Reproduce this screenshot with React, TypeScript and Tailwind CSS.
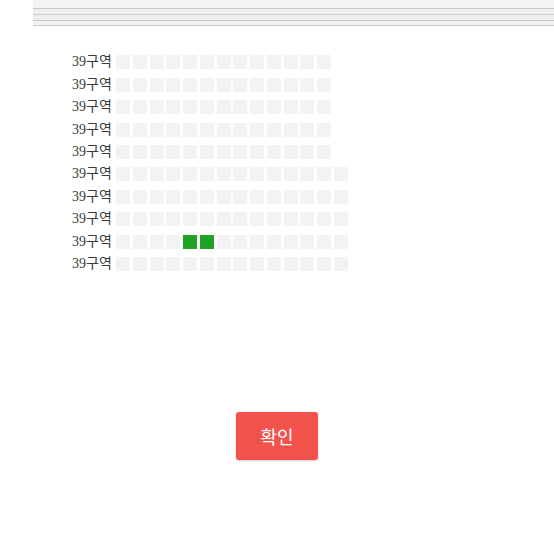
import React from "react";

const rows = Array.from({ length: 10 }, (_, i) => ({
  count: i < 5 ? 13 : 14,
  selected: i === 8 ? [4, 5] : [],
}));

export default function App() {
  return (
    <div className="w-[554px] h-[554px] bg-white overflow-hidden relative">
      <div className="ml-[33px] h-[26px] bg-[#f0f0f0] flex flex-col">
        <div className="h-[8px] bg-[#f3f3f3]" />
        <div className="h-px bg-[#c8c8c8]" />
        <div className="h-[5px] bg-[#eeeeee]" />
        <div className="h-px bg-[#cccccc]" />
        <div className="h-[5px] bg-[#eeeeee]" />
        <div className="h-px bg-[#c8c8c8]" />
        <div className="h-[4px] bg-[#f0f0f0]" />
        <div className="h-px bg-[#cccccc]" />
      </div>
      <div className="mt-[25px] ml-[72px] flex flex-col">
        {rows.map((r, i) => (
          <div key={i} className="h-[22.44px] flex items-center">
            <div
              className="w-[44px] text-[14px] text-[#3a3a3a] leading-none"
              style={{ fontFamily: '"Liberation Serif", "Noto Sans CJK KR", serif' }}
            >
              39구역
            </div>
            <div className="flex gap-[2.75px]">
              {Array.from({ length: r.count }, (_, j) => (
                <div
                  key={j}
                  className={
                    r.selected.includes(j)
                      ? "w-[14px] h-[14px] bg-[#1ea324]"
                      : "w-[14px] h-[14px] bg-[#f3f3f3]"
                  }
                />
              ))}
            </div>
          </div>
        ))}
      </div>
      <div className="flex justify-center mt-[137px]">
        <button
          className="w-[82px] h-[48px] rounded-[3px] bg-[#f4524c] text-white text-[18px] shadow-[0_1px_2px_rgba(0,0,0,0.2)] flex items-center justify-center"
          style={{ fontFamily: '"Noto Sans CJK KR", sans-serif' }}
        >
          확인
        </button>
      </div>
    </div>
  );
}
